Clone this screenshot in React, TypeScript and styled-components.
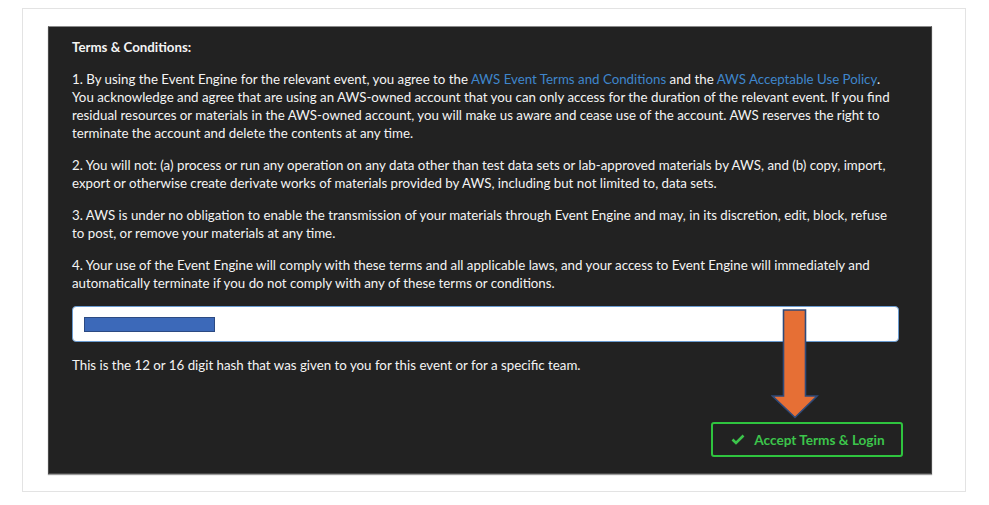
import React from "react";
import styled, { createGlobalStyle } from "styled-components";

const Global = createGlobalStyle`
  html, body { margin: 0; padding: 0; background: #ffffff; }
  body { font-family: Lato, "Open Sans", sans-serif; }
`;

const Card = styled.div`
  box-sizing: border-box;
  margin: 8px 0 0 22px;
  width: 944px;
  height: 484px;
  border: 1px solid #e3e3e3;
  padding: 17px 0 0 25px;
  background: #fff;
`;

const Panel = styled.div`
  position: relative;
  box-sizing: border-box;
  width: 884px;
  height: 448px;
  background: #222222;
  border: 1px solid #4a4a4a;
  border-top-color: #8a8a8a;
  box-shadow: 0 1px 1px #9a9a9a;
  padding: 11px 32px 0 23px;
  color: #f4f4f4;
  font-size: 13.3px;
  line-height: 18px;
  display: flex;
  flex-direction: column;
`;

const Title = styled.div`
  font-weight: 700;
`;

const Para = styled.p`
  margin: 14px 0 0 0;
`;

const Link = styled.a`
  color: #3f86cc;
  text-decoration: none;
`;

const InputBox = styled.div`
  box-sizing: border-box;
  margin-top: 14px;
  height: 36px;
  background: #ffffff;
  border: 1px solid #6a9bd0;
  border-radius: 4px;
  display: flex;
  align-items: center;
  padding-left: 11px;
`;

const Redaction = styled.div`
  box-sizing: border-box;
  width: 131px;
  height: 15px;
  background: #3c69b9;
  border: 1px solid #2c4a82;
`;

const Help = styled.p`
  margin: 14px 0 0 0;
`;

const ButtonRow = styled.div`
  display: flex;
  justify-content: flex-end;
  margin-top: 48px;
  margin-right: -4px;
`;

const AcceptButton = styled.button`
  box-sizing: border-box;
  width: 192px;
  height: 35px;
  background: transparent;
  border: 2px solid #2fc43f;
  border-radius: 3px;
  color: #3cc54b;
  font-family: Lato, "Open Sans", sans-serif;
  font-weight: 700;
  font-size: 13.6px;
  display: flex;
  align-items: center;
  justify-content: center;
  gap: 9px;
  padding: 0 0 0 2px;
`;

const Arrow = styled.svg`
  position: absolute;
  left: 722px;
  top: 282px;
`;

export default function App() {
  return (
    <>
      <Global />
      <Card>
        <Panel>
          <Title>Terms &amp; Conditions:</Title>
          <Para>
            1. By using the Event Engine for the relevant event, you agree to the{" "}
            <Link href="#">AWS Event Terms and Conditions</Link> and the{" "}
            <Link href="#">AWS Acceptable Use Policy</Link>. You acknowledge and agree
            that are using an AWS-owned account that you can only access for the
            duration of the relevant event. If you find residual resources or materials
            in the AWS-owned account, you will make us aware and cease use of the
            account. AWS reserves the right to terminate the account and delete the
            contents at any time.
          </Para>
          <Para>
            2. You will not: (a) process or run any operation on any data other than test
            data sets or lab-approved materials by AWS, and (b) copy, import, export or
            otherwise create derivate works of materials provided by AWS, including but
            not limited to, data sets.
          </Para>
          <Para>
            3. AWS is under no obligation to enable the transmission of your materials
            through Event Engine and may, in its discretion, edit, block, refuse to post,
            or remove your materials at any time.
          </Para>
          <Para>
            4. Your use of the Event Engine will comply with these terms and all
            applicable laws, and your access to Event Engine will immediately and
            automatically terminate if you do not comply with any of these terms or
            conditions.
          </Para>
          <InputBox>
            <Redaction />
          </InputBox>
          <Help>
            This is the 12 or 16 digit hash that was given to you for this event or for a
            specific team.
          </Help>
          <ButtonRow>
            <AcceptButton>
              <svg width="14" height="11" viewBox="0 0 14 11">
                <path
                  d="M1.5 5.5 L5 9 L12.5 1.5"
                  fill="none"
                  stroke="#3cc54b"
                  strokeWidth="2.6"
                />
              </svg>
              Accept Terms &amp; Login
            </AcceptButton>
          </ButtonRow>
          <Arrow width="48" height="110" viewBox="0 0 48 110">
            <polygon
              points="12.5,1 34.5,1 34.5,87 46,87 24,108.5 1.5,87 12.5,87"
              fill="#e66f35"
              stroke="#2e4a7a"
              strokeWidth="1.6"
              strokeLinejoin="miter"
            />
          </Arrow>
        </Panel>
      </Card>
    </>
  );
}
